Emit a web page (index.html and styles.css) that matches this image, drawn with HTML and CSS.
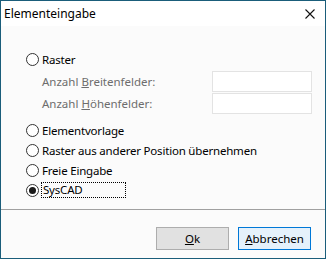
FILE: index.html
```html
<!DOCTYPE html>
<html lang="de">
  <head>
    <meta charset="UTF-8" />
    <title>Elementeingabe</title>
    <link rel="stylesheet" href="styles.css">
  </head>
  <body>
    <div class="window">
      <div class="titlebar">
        <span class="title">Elementeingabe</span>
        <svg class="close" width="10" height="10" viewBox="0 0 10 10">
          <path d="M0.5 0.5 L9.5 9.5 M9.5 0.5 L0.5 9.5" stroke="#111" stroke-width="1.1" />
        </svg>
      </div>

      <div class="content">
        <div class="option">
          <span class="radio"></span>
          <span class="option-text">Raster</span>
        </div>
        <div class="field">
          <span class="field-label">Anzahl <u>B</u>reitenfelder:</span>
          <span class="textbox"></span>
        </div>
        <div class="field">
          <span class="field-label">Anzahl <u>H</u>öhenfelder:</span>
          <span class="textbox"></span>
        </div>
        <div class="option gap">
          <span class="radio"></span>
          <span class="option-text">Elementvorlage</span>
        </div>
        <div class="option">
          <span class="radio"></span>
          <span class="option-text">Raster aus anderer Position übernehmen</span>
        </div>
        <div class="option">
          <span class="radio"></span>
          <span class="option-text">Freie Eingabe</span>
        </div>
        <div class="option">
          <span class="radio checked"></span>
          <span class="option-text focused">SysCAD</span>
        </div>
      </div>

      <div class="footer">
        <button class="btn"><u>O</u>k</button>
        <button class="btn default"><u>A</u>bbrechen</button>
      </div>
    </div>
  </body>
</html>
```

FILE: styles.css
```css
body {
  margin: 0;
  font-family: "Noto Sans", sans-serif;
  font-size: 11.5px;
  color: #000;
}
.window {
  width: 326px;
  height: 259px;
  box-sizing: border-box;
  border: 1px solid #1a5d7a;
  background-color: #fbfbfb;
  display: flex;
  flex-direction: column;
}
.titlebar {
  height: 25px;
  background-color: #fff;
  display: flex;
  align-items: center;
  justify-content: space-between;
  padding: 0 10px 0 3px;
}
.title {
  font-size: 12px;
}
.content {
  flex: 1;
  padding: 22px 13px 0 25px;
}
.option {
  height: 20px;
  display: flex;
  align-items: center;
}
.option:first-child {
  height: 22px;
}
.option.gap {
  margin-top: 6px;
}
.option-text {
  letter-spacing: -0.2px;
}
.radio {
  width: 11px;
  height: 11px;
  border: 1px solid #333;
  border-radius: 50%;
  background-color: #fff;
  margin-right: 3px;
  display: flex;
  align-items: center;
  justify-content: center;
}
.radio.checked::after {
  content: "";
  width: 7px;
  height: 7px;
  border-radius: 50%;
  background-color: #1a1a1a;
}
.focused {
  width: 82px;
  outline: 1px dotted #000;
  padding-left: 1px;
  line-height: 14px;
}
.field {
  height: 22px;
  display: flex;
  align-items: center;
  justify-content: space-between;
  padding-left: 16px;
}
.field-label {
  color: #6d6d6d;
}
.textbox {
  width: 98px;
  height: 19px;
  border: 1px solid #e3e3e3;
  background-color: #fff;
}
.footer {
  height: 49px;
  box-sizing: border-box;
  border-top: 1px solid #a0a0a0;
  display: flex;
  justify-content: flex-end;
  align-items: flex-start;
  gap: 9px;
  padding: 17px 14px 0 0;
}
.btn {
  width: 73px;
  height: 23px;
  font-family: inherit;
  font-size: 11.5px;
  border: 1px solid #adadad;
  background-color: #e1e1e1;
  padding: 0;
}
.btn.default {
  border-color: #0078d7;
  background-color: #e5f1fb;
}
```
